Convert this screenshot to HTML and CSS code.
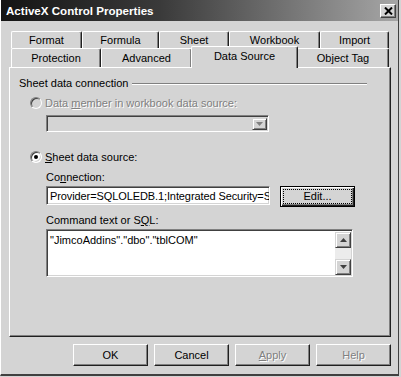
FILE: index.html
```html
<!DOCTYPE html>
<html lang="en">
<head>
  <meta charset="UTF-8">
  <title>ActiveX Control Properties</title>
  <link rel="stylesheet" href="styles.css">
</head>
<body>
  <div class="window">
    <div class="titlebar">
      <span class="title">ActiveX Control Properties</span>
      <span class="close">
        <svg width="9" height="8" viewBox="0 0 9 8"><path d="M1 0.5 L8 7.5 M8 0.5 L1 7.5" stroke="#000" stroke-width="2"/></svg>
      </span>
    </div>
    <div class="content">
      <div class="tabs">
        <div class="tab-row">
          <div class="tab tab-format">Format</div>
          <div class="tab tab-formula">Formula</div>
          <div class="tab tab-sheet">Sheet</div>
          <div class="tab tab-workbook">Workbook</div>
          <div class="tab tab-import">Import</div>
        </div>
        <div class="tab-row tab-row-front">
          <div class="tab tab-protection">Protection</div>
          <div class="tab tab-advanced">Advanced</div>
          <div class="tab tab-active">Data Source</div>
          <div class="tab tab-objecttag">Object Tag</div>
        </div>
      </div>

      <div class="panel">
        <div class="group-head">
          <span>Sheet data connection</span>
          <span class="etch"></span>
        </div>

        <div class="option option-disabled">
          <span class="radio"></span>
          <span class="label">Data <u>m</u>ember in workbook data source:</span>
        </div>
        <div class="combo">
          <span class="combo-btn">
            <svg width="7" height="4" viewBox="0 0 7 4"><polygon points="0,0 7,0 3.5,4" fill="#808080"/></svg>
          </span>
        </div>

        <div class="option option-second">
          <span class="radio radio-checked"></span>
          <span class="label"><u>S</u>heet data source:</span>
        </div>

        <div class="field-label">Co<u>n</u>nection:</div>
        <div class="conn-row">
          <div class="textbox">Provider=SQLOLEDB.1;Integrated Security=S</div>
          <div class="btn btn-default"><span class="focus">Edit...</span></div>
        </div>

        <div class="field-label field-label-sql">Command text or S<u>Q</u>L:</div>
        <div class="memo">
          <div class="memo-text">"JimcoAddins"."dbo"."tblCOM"</div>
          <div class="vscroll">
            <span class="sbtn">
              <svg width="7" height="4" viewBox="0 0 7 4"><polygon points="0,4 7,4 3.5,0" fill="#404040"/></svg>
            </span>
            <span class="strack"></span>
            <span class="sbtn">
              <svg width="7" height="4" viewBox="0 0 7 4"><polygon points="0,0 7,0 3.5,4" fill="#404040"/></svg>
            </span>
          </div>
        </div>
      </div>

      <div class="buttons">
        <div class="btn">OK</div>
        <div class="btn">Cancel</div>
        <div class="btn btn-disabled"><u>A</u>pply</div>
        <div class="btn btn-disabled">Help</div>
      </div>
    </div>
  </div>
</body>
</html>
```

FILE: styles.css
```css
* {
  box-sizing: border-box;
  margin: 0;
  padding: 0;
}
body {
  background: #d4d4d4;
  font-family: "Liberation Sans", Arial, sans-serif;
  font-size: 11px;
  color: #000;
  overflow: hidden;
}
u {
  text-decoration: underline;
  text-underline-offset: 1px;
}
.window {
  width: 399px;
  height: 376px;
  border-left: 1px solid #fff;
  border-right: 1px solid #404040;
  border-bottom: 2px solid #404040;
  display: flex;
  flex-direction: column;
}
.titlebar {
  height: 21px;
  background: linear-gradient(to right, #141414, #3a3a3a 40%, #a6a6a6);
  display: flex;
  align-items: center;
  justify-content: space-between;
  padding: 0 2px 0 5px;
}
.title {
  color: #fff;
  font-weight: bold;
  font-size: 11.6px;
}
.close {
  width: 16px;
  height: 14px;
  background: #d4d4d4;
  border: 1px solid;
  border-color: #fff #404040 #404040 #fff;
  box-shadow: inset -1px -1px #808080;
  display: flex;
  align-items: center;
  justify-content: center;
}
.content {
  flex: 1;
  padding: 10px 7px 0 8px;
  display: flex;
  flex-direction: column;
}

/* tabs */
.tabs {
  margin: 0 2px;
}
.tab-row {
  display: flex;
  height: 17px;
}
.tab-row-front {
  height: 19px;
}
.tab {
  border-top: 1px solid #fff;
  border-left: 1px solid #fff;
  border-right: 1px solid #202020;
  box-shadow: inset -1px 0 #808080;
  border-radius: 2px 2px 0 0;
  text-align: center;
  padding-top: 2px;
  line-height: 13px;
}
.tab-row-front .tab {
  padding-top: 3px;
}
.tab-format { width: 71px; }
.tab-formula { width: 77px; }
.tab-sheet { width: 70px; }
.tab-workbook { width: 91px; }
.tab-import { width: 69px; }
.tab-protection { width: 90px; }
.tab-advanced { width: 91px; }
.tab-objecttag { width: 92px; }
.tab-row-front .tab-active {
  width: 107px;
  height: 22px;
  margin: -2px -1px -1px -1px;
  padding-top: 3px;
  background: #d4d4d4;
  position: relative;
  z-index: 1;
}

/* page panel */
.panel {
  height: 270px;
  border: 1px solid;
  border-color: #fff #202020 #202020 #fff;
  box-shadow: inset -1px -1px #808080;
  padding: 9px 0 0 9px;
  display: flex;
  flex-direction: column;
}
.group-head {
  display: flex;
  align-items: center;
  line-height: 13px;
  margin-right: 23px;
}
.etch {
  flex: 1;
  height: 2px;
  margin-left: 4px;
  border-top: 1px solid #808080;
  border-bottom: 1px solid #fff;
}
.option {
  display: flex;
  align-items: center;
  gap: 3px;
  margin: 7px 0 0 11px;
  height: 12px;
  line-height: 13px;
}
.option-second {
  margin-top: 19px;
}
.option-disabled .label {
  color: #808080;
  text-shadow: 1px 1px #fff;
}
.radio {
  width: 12px;
  height: 12px;
  border-radius: 50%;
  border: 1px solid;
  border-color: #808080 #fff #fff #808080;
  box-shadow: inset 1px 1px #404040, inset -1px -1px #d4d4d4;
  background: #fff;
  display: flex;
  align-items: center;
  justify-content: center;
}
.option-disabled .radio {
  background: #d4d4d4;
}
.radio-checked::after {
  content: "";
  width: 4px;
  height: 4px;
  border-radius: 50%;
  background: #000;
}
.combo {
  width: 223px;
  height: 17px;
  margin: 6px 0 0 27px;
  border: 1px solid;
  border-color: #808080 #fff #fff #808080;
  box-shadow: inset 1px 1px #404040, inset -1px -1px #d4d4d4;
  display: flex;
  justify-content: flex-end;
  padding: 2px 1px 1px 2px;
}
.combo-btn {
  width: 15px;
  border: 1px solid;
  border-color: #d4d4d4 #404040 #404040 #d4d4d4;
  box-shadow: inset 1px 1px #fff, inset -1px -1px #808080;
  display: flex;
  align-items: center;
  justify-content: center;
}
.field-label {
  margin: 8px 0 0 27px;
  line-height: 13px;
}
.field-label-sql {
  margin-top: 7px;
}
.conn-row {
  display: flex;
  align-items: flex-start;
  gap: 10px;
  margin: 2px 0 0 27px;
}
.textbox {
  width: 224px;
  height: 19px;
  background: #fff;
  border: 1px solid;
  border-color: #808080 #fff #fff #808080;
  box-shadow: inset 1px 1px #404040, inset -1px -1px #d4d4d4;
  padding: 3px 0 0 3px;
  line-height: 13px;
  letter-spacing: -0.1px;
  white-space: nowrap;
  overflow: hidden;
}
.btn {
  width: 75px;
  height: 22px;
  border: 1px solid;
  border-color: #fff #202020 #202020 #fff;
  box-shadow: inset -1px -1px #808080;
  display: flex;
  align-items: center;
  justify-content: center;
}
.btn-default {
  height: 21px;
  border: 1px solid #000;
  box-shadow: inset 1px 1px #fff, inset -1px -1px #202020, inset -2px -2px #808080;
  padding: 2px;
}
.focus {
  width: 100%;
  height: 100%;
  border: 1px dotted #000;
  line-height: 11px;
  display: flex;
  align-items: center;
  justify-content: center;
}
.btn-disabled {
  color: #808080;
  text-shadow: 1px 1px #fff;
}
.memo {
  width: 307px;
  height: 48px;
  margin: 2px 0 0 27px;
  background: #fff;
  border: 1px solid;
  border-color: #808080 #fff #fff #808080;
  box-shadow: inset 1px 1px #404040, inset -1px -1px #d4d4d4;
  display: flex;
  padding: 2px 1px 1px 2px;
}
.memo-text {
  flex: 1;
  padding: 2px 0 0 1px;
  line-height: 13px;
}
.vscroll {
  width: 16px;
  display: flex;
  flex-direction: column;
}
.sbtn {
  height: 16px;
  background: #d4d4d4;
  border: 1px solid;
  border-color: #d4d4d4 #404040 #404040 #d4d4d4;
  box-shadow: inset 1px 1px #fff, inset -1px -1px #808080;
  display: flex;
  align-items: center;
  justify-content: center;
}
.strack {
  flex: 1;
  background: #ececec;
}

/* dialog buttons */
.buttons {
  display: flex;
  justify-content: flex-end;
  gap: 6px;
  margin-top: 7px;
}
```
